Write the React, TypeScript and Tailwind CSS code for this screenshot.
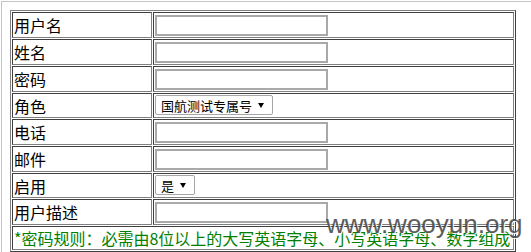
const cjk = "font-['Noto_Sans_CJK_SC','Noto_Sans',sans-serif]";

const cell =
  'border border-t-[#404040] border-l-[#404040] border-r-[#808080] border-b-[#808080]';

function TextInput() {
  return (
    <input
      type="text"
      className="block h-[21px] w-[173px] border-2 border-[#a9a9a9] bg-white px-1 text-[13px] outline-none"
    />
  );
}

function FakeSelect({ value, width }: { value: string; width: string }) {
  return (
    <div
      className={`flex h-[20px] items-center justify-between rounded-[2px] border border-[#a6a6a6] bg-white pl-[5px] pr-[8px] text-[13px] leading-none text-black ${width}`}
    >
      <span>{value}</span>
      <svg width="6" height="5" viewBox="0 0 6 5" className="shrink-0">
        <polygon points="0,0 6,0 3,5" fill="#000" />
      </svg>
    </div>
  );
}

const rows: { label: string; kind: 'input' | 'role' | 'enable' }[] = [
  { label: '用户名', kind: 'input' },
  { label: '姓名', kind: 'input' },
  { label: '密码', kind: 'input' },
  { label: '角色', kind: 'role' },
  { label: '电话', kind: 'input' },
  { label: '邮件', kind: 'input' },
  { label: '启用', kind: 'enable' },
  { label: '用户描述', kind: 'input' },
];

export default function App() {
  return (
    <div className={`relative min-h-[252px] bg-white pl-[1px] pt-[1px] ${cjk}`}>
      <div className="min-h-[251px] border-l border-t border-[#c4c4c4] p-[8px]">
        <table className="w-[506px] table-fixed border-separate border-spacing-[1px] border border-t-[#808080] border-l-[#808080] border-r-[#404040] border-b-[#404040]">
          <tbody>
            {rows.map((row) => {
              const h = row.kind === 'input' ? 'h-[26px]' : 'h-[25px]';
              return (
                <tr key={row.label}>
                  <td
                    className={`${cell} ${h} w-[140px] p-[1px] align-middle text-[16px] leading-[20px] text-black`}
                  >
                    {row.label}
                  </td>
                  <td
                    className={`${cell} ${h} w-[361px] px-[1px] pb-[1px] align-top ${
                      row.kind === 'input' ? 'pt-[2px]' : 'pt-[1px]'
                    }`}
                  >
                    {row.kind === 'input' && <TextInput />}
                    {row.kind === 'role' && (
                      <FakeSelect value="国航测试专属号" width="w-[118px]" />
                    )}
                    {row.kind === 'enable' && (
                      <FakeSelect value="是" width="w-[40px]" />
                    )}
                  </td>
                </tr>
              );
            })}
            <tr>
              <td
                colSpan={2}
                className={`${cell} h-[23px] whitespace-nowrap p-[1px] align-middle text-[16px] leading-[20px] text-[#008000]`}
              >
                *密码规则：必需由8位以上的大写英语字母、小写英语字母、数字组成
              </td>
            </tr>
          </tbody>
        </table>
      </div>
      <div className="pointer-events-none absolute left-[326px] top-[211px] font-['Liberation_Sans',Arial,sans-serif] text-[26px] leading-none text-[#4d4d4d] opacity-90 [text-shadow:1px_1px_0_#ffffff]">
        www.wooyun.org
      </div>
    </div>
  );
}
